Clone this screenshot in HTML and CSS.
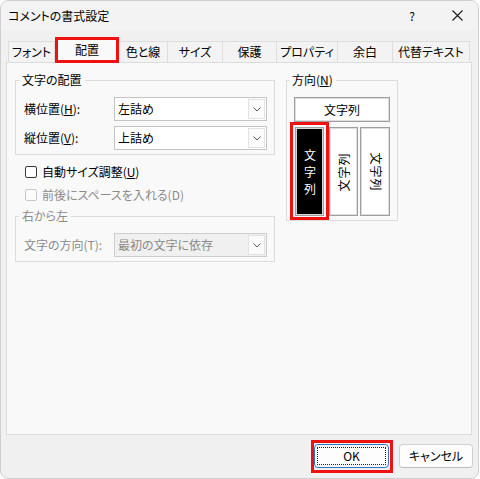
FILE: index.html
```html
<!DOCTYPE html>
<html lang="ja">
<head>
<meta charset="utf-8">
<title>コメントの書式設定</title>
<link rel="stylesheet" href="styles.css">
</head>
<body>
<div class="window">
  <div class="titlebar">
    <span class="title">コメントの書式設定</span>
    <span class="help">?</span>
    <span class="close"><svg width="11" height="11" viewBox="0 0 11 11"><path d="M0.5 0.5L10.5 10.5M10.5 0.5L0.5 10.5" stroke="#1a1a1a" stroke-width="1.1" fill="none"/></svg></span>
  </div>
  <div class="tabs">
    <div class="tab t-font">フォント</div>
    <div class="tab t-align selected">配置</div>
    <div class="tab t-color">色と線</div>
    <div class="tab t-size">サイズ</div>
    <div class="tab t-protect">保護</div>
    <div class="tab t-prop">プロパティ</div>
    <div class="tab t-margin">余白</div>
    <div class="tab t-alt">代替テキスト</div>
  </div>
  <div class="panel">
    <div class="col-left">
      <fieldset class="group g-align">
        <legend>文字の配置</legend>
        <div class="row">
          <span class="lbl">横位置(<u>H</u>):</span>
          <div class="select"><span class="value">左詰め</span><span class="arrow"><svg width="8" height="5" viewBox="0 0 8 5"><path d="M0.5 0.5L4 4L7.5 0.5" stroke="#5a5a5a" fill="none"/></svg></span></div>
        </div>
        <div class="row row2">
          <span class="lbl">縦位置(<u>V</u>):</span>
          <div class="select"><span class="value">上詰め</span><span class="arrow"><svg width="8" height="5" viewBox="0 0 8 5"><path d="M0.5 0.5L4 4L7.5 0.5" stroke="#5a5a5a" fill="none"/></svg></span></div>
        </div>
      </fieldset>
      <div class="check c1"><span class="box"></span>自動サイズ調整(<u>U</u>)</div>
      <div class="check c2 disabled"><span class="box"></span>前後にスペースを入れる(D)</div>
      <fieldset class="group g-rtl disabled">
        <legend>右から左</legend>
        <div class="row">
          <span class="lbl">文字の方向(T):</span>
          <div class="select"><span class="value">最初の文字に依存</span><span class="arrow"><svg width="8" height="5" viewBox="0 0 8 5"><path d="M0.5 0.5L4 4L7.5 0.5" stroke="#5a5a5a" fill="none"/></svg></span></div>
        </div>
      </fieldset>
    </div>
    <fieldset class="group g-dir">
      <legend>方向(<u>N</u>)</legend>
      <div class="hbtn">文字列</div>
      <div class="vrow">
        <div class="vbtn v1 sel"><span class="vt">文字列</span><span class="ring"></span></div>
        <div class="vbtn v2"><span class="rot-ccw">文字列</span></div>
        <div class="vbtn v3"><span class="rot-cw">文字列</span></div>
      </div>
    </fieldset>
  </div>
  <div class="buttons">
    <div class="btn ok"><span class="focus">OK</span><span class="ring"></span></div>
    <div class="btn cancel">キャンセル</div>
  </div>
</div>
</body>
</html>
```

FILE: styles.css
```css
* { box-sizing: border-box; }
html, body { margin: 0; padding: 0; background: #ffffff; }
body {
  font-family: "Noto Sans CJK JP", "Noto Sans", sans-serif;
  font-size: 12px;
  line-height: 16px;
  color: #000;
  font-feature-settings: "palt";
}
.window {
  width: 479px;
  height: 479px;
  background: #f0f0f0;
  border: 1px solid #cfcfcf;
  border-radius: 8px;
  overflow: hidden;
  display: flex;
  flex-direction: column;
}
.titlebar {
  height: 29px;
  flex: none;
  display: flex;
  align-items: center;
  padding-left: 7px;
  padding-right: 15px;
  background: #f3f3f3;
}
.title { flex: 1; }
.help { width: 10px; text-align: center; margin-right: 35px; font-size: 12px; }
.close { width: 11px; height: 11px; display: flex; margin-top: -1px; }

.tabs {
  height: 32px;
  flex: none;
  display: flex;
  align-items: flex-end;
  padding-left: 7px;
}
.tab {
  height: 21px;
  display: flex;
  align-items: center;
  justify-content: center;
  background: #f3f3f3;
  border-top: 1px solid #dddddd;
  border-right: 1px solid #dddddd;
  white-space: nowrap;
}
.t-font { width: 47px; border-left: 1px solid #dddddd; }
.t-align { width: 64px; }
.t-color { width: 49px; }
.t-size { width: 55px; }
.t-protect { width: 54px; }
.t-prop { width: 61px; }
.t-margin { width: 55px; }
.t-alt { width: 77px; }
.tab.selected {
  height: 26px;
  margin-bottom: -1px;
  background: #f9f9f9;
  border: 3px solid #ee1111;
  position: relative;
  z-index: 2;
  padding-bottom: 1px;
}

.panel {
  margin-left: 5px;
  width: 466px;
  height: 373px;
  flex: none;
  background: #f9f9f9;
  border: 1px solid #dcdcdc;
  padding: 9px 0 0 8px;
  display: flex;
  align-items: flex-start;
}
.col-left { width: 260px; display: flex; flex-direction: column; }

fieldset.group {
  margin: 0;
  border: 1px solid #dcdcdc;
  min-width: 0;
}
fieldset.group legend {
  padding: 0 3px;
  margin-left: -5px;
  line-height: 16px;
}
.g-align { width: 260px; padding: 9px 6px 4px 8px; }
.g-rtl { width: 260px; padding: 9px 6px 4px 8px; margin-top: 3px !important; }
.g-dir { width: 112px; padding: 9px 7px 4px 7px; margin-left: 11px !important; }

.row { display: flex; align-items: center; height: 24px; }
.row2 { margin-top: 5px; }
.lbl { width: 90px; white-space: nowrap; }
.select {
  width: 153px;
  height: 24px;
  display: flex;
  background: #ffffff;
  border: 1px solid #c4c4c4;
}
.select .value { flex: 1; padding-left: 3px; display: flex; align-items: center; }
.select .arrow {
  width: 17px;
  margin: 1px;
  border: 1px solid #e2e2e2;
  display: flex;
  align-items: center;
  justify-content: center;
  background: #fbfbfb;
}
.disabled { color: #8a8a8a; }
.disabled .select { background: #f0f0f0; border-color: #cccccc; }
.disabled .select .arrow { background: #fafafa; }

.check { height: 20px; display: flex; align-items: center; padding-left: 10px; white-space: nowrap; }
.c1 { margin-top: 7px; }
.c2 { margin-top: 3px; }
.check .box {
  width: 12px;
  height: 12px;
  border: 1px solid #3a3a3a;
  border-radius: 2px;
  background: #ffffff;
  margin-right: 5px;
}
.check.disabled .box { border-color: #c8c8c8; background: #fbfbfb; }

.hbtn {
  width: 96px;
  height: 25px;
  display: flex;
  align-items: center;
  justify-content: center;
  background: #ffffff;
  border: 1px solid #9e9e9e;
  box-shadow: inset 0 0 0 1px #dedede;
}
.vrow { display: flex; margin-top: 5px; }
.vbtn {
  height: 89px;
  display: flex;
  align-items: center;
  justify-content: center;
  background: #ffffff;
  border: 1px solid #9e9e9e;
  box-shadow: inset 0 0 0 1px #dedede;
  white-space: nowrap;
}
.v1 { width: 29px; margin-left: 1px; position: relative; }
.v2 { width: 29px; margin-left: 5px; }
.v3 { width: 30px; margin-left: 2px; }
.vbtn.sel { background: #000000; color: #ffffff; box-shadow: inset 0 0 0 1px #d6d6d6; }
.vt { writing-mode: vertical-rl; letter-spacing: 5px; margin-bottom: -5px; }
.rot-ccw { display: inline-block; transform: rotate(-90deg); letter-spacing: 1px; }
.rot-cw { display: inline-block; transform: rotate(90deg); letter-spacing: 1px; }

.ring {
  position: absolute;
  border: 3px solid #ee1111;
  pointer-events: none;
}
.v1 .ring { top: -6px; left: -6px; right: -6px; bottom: -5px; }

.buttons {
  display: flex;
  justify-content: flex-end;
  margin-top: 9px;
  padding-right: 5px;
}
.btn {
  height: 24px;
  display: flex;
  align-items: center;
  justify-content: center;
  background: #fdfdfd;
  border: 1px solid #d0d0d0;
  border-bottom-color: #bcbcbc;
  border-radius: 4px;
}
.ok { width: 75px; margin-right: 10px; border-color: #2a78c8; position: relative; padding: 3px; }
.ok .focus {
  width: 100%;
  height: 100%;
  display: flex;
  align-items: center;
  justify-content: center;
  outline: 1px dotted #222;
}
.ok .ring { top: -5px; left: -4px; right: -5px; bottom: -6px; border-radius: 0; }
.cancel { width: 74px; }
```
